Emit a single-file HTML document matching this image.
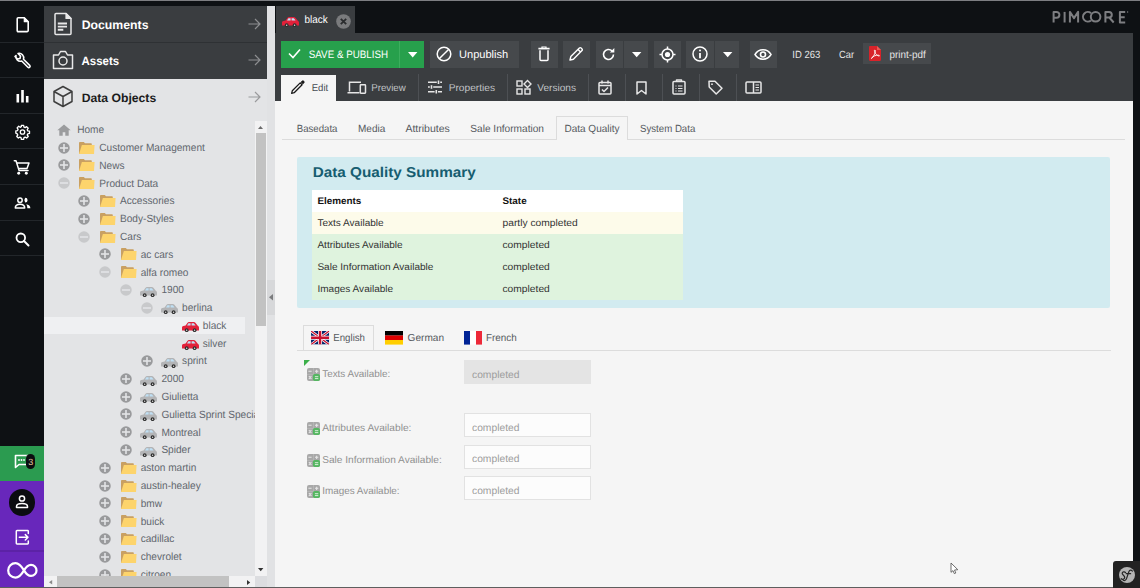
<!DOCTYPE html>
<html><head><meta charset="utf-8"><style>
html,body{margin:0;padding:0;}
body{width:1140px;height:588px;overflow:hidden;position:relative;font-family:'Liberation Sans', sans-serif;background:#0e1114;}
svg{display:block;overflow:visible}
</style></head><body>
<div style="position:absolute;left:0px;top:0px;width:1140px;height:588px;background:#0e1114;"></div>
<div style="position:absolute;left:0px;top:0px;width:1140px;height:1px;background:#7d7e82;"></div>
<div style="position:absolute;left:0px;top:41.6px;width:44px;height:1px;background:#22262a;"></div>
<div style="position:absolute;left:0px;top:77.2px;width:44px;height:1px;background:#22262a;"></div>
<div style="position:absolute;left:0px;top:112.80000000000001px;width:44px;height:1px;background:#22262a;"></div>
<div style="position:absolute;left:0px;top:148.4px;width:44px;height:1px;background:#22262a;"></div>
<div style="position:absolute;left:0px;top:184.0px;width:44px;height:1px;background:#22262a;"></div>
<div style="position:absolute;left:0px;top:219.60000000000002px;width:44px;height:1px;background:#22262a;"></div>
<div style="position:absolute;left:0px;top:255.20000000000002px;width:44px;height:1px;background:#22262a;"></div>
<svg style="position:absolute;left:16px;top:17.2px;" width="14" height="16" viewBox="0 0 14 16"><path d="M2.2 0.8H8.3L12.2 4.7V13.6C12.2 14.2 11.8 14.6 11.2 14.6H2.2C1.6 14.6 1.2 14.2 1.2 13.6V1.8C1.2 1.2 1.6 0.8 2.2 0.8z" fill="none" stroke="#fff" stroke-width="1.6" stroke-linejoin="round"/><path d="M8.3 0.8V4.7H12.2z" fill="#fff" stroke="#fff" stroke-width="1.2" stroke-linejoin="round"/></svg>
<svg style="position:absolute;left:13.2px;top:52px;" width="18" height="18" viewBox="0 0 18 18"><path d="M2 4.5l2.5 2.5 2.5-0.5 0.5-2.5-2.5-2.5a4.5 4.5 0 0 1 5.5 5.7l6.2 6.2a1.2 1.2 0 0 1-1.8 1.8l-6.2-6.2a4.5 4.5 0 0 1-5.7-5.5z" fill="none" stroke="#fff" stroke-width="1.6" stroke-linejoin="round" stroke-linecap="round"/></svg>
<svg style="position:absolute;left:15px;top:89px;" width="15" height="14" viewBox="0 0 15 14"><rect x="1.5" y="5" width="2.6" height="8.5" fill="#fff"/><rect x="6.2" y="1" width="2.6" height="12.5" fill="#fff"/><rect x="10.9" y="7" width="2.6" height="6.5" fill="#fff"/></svg>
<svg style="position:absolute;left:14px;top:124px;" width="17" height="16" viewBox="0 0 24 24"><path d="M10.3 2h3.4l.5 2.6 1.8.8 2.2-1.5 2.4 2.4-1.5 2.2.8 1.8 2.6.5v3.4l-2.6.5-.8 1.8 1.5 2.2-2.4 2.4-2.2-1.5-1.8.8-.5 2.6h-3.4l-.5-2.6-1.8-.8-2.2 1.5-2.4-2.4 1.5-2.2-.8-1.8L2 13.7v-3.4l2.6-.5.8-1.8-1.5-2.2 2.4-2.4 2.2 1.5 1.8-.8z" fill="none" stroke="#fff" stroke-width="2" stroke-linejoin="round"/><circle cx="12" cy="12" r="3.3" fill="none" stroke="#fff" stroke-width="2"/></svg>
<svg style="position:absolute;left:13px;top:159px;" width="17" height="17" viewBox="0 0 17 17"><path d="M1.3 1.7H3L6 11.4H15 M4.3 4H16L14 9.5H5.6" fill="none" stroke="#fff" stroke-width="1.5" stroke-linejoin="round" stroke-linecap="round"/><circle cx="5.7" cy="14.3" r="1.45" fill="#fff"/><circle cx="13.3" cy="14.3" r="1.45" fill="#fff"/></svg>
<svg style="position:absolute;left:14px;top:196px;" width="17" height="13" viewBox="0 0 17 13"><circle cx="6" cy="4.2" r="2.2" fill="none" stroke="#fff" stroke-width="1.5"/><path d="M1.3 12C1.3 9.5 3.5 8.2 6 8.2S10.7 9.5 10.7 12z" fill="none" stroke="#fff" stroke-width="1.5" stroke-linejoin="round"/><path d="M11.2 1.8A2.4 2.4 0 0 1 11.2 6.6A4 4 0 0 1 11.2 1.8z M12.2 8.3C14.8 8.6 16.4 10 16.4 12.3H13.3C13.3 10.6 13 9.3 12.2 8.3z" fill="#fff"/></svg>
<svg style="position:absolute;left:15px;top:232px;" width="15" height="14" viewBox="0 0 15 14"><circle cx="5.8" cy="5.8" r="4.3" fill="none" stroke="#fff" stroke-width="1.8"/><path d="M9 9l4.5 4.5" stroke="#fff" stroke-width="2" stroke-linecap="round"/></svg>
<div style="position:absolute;left:0px;top:445.5px;width:44px;height:35.5px;background:#2b9b50;"></div>
<div style="position:absolute;left:0px;top:481px;width:44px;height:107px;background:#6827bb;"></div>
<div style="position:absolute;left:0px;top:550.3px;width:44px;height:1.4px;background:#5c22a6;"></div>
<svg style="position:absolute;left:14px;top:454px;" width="16" height="16" viewBox="0 0 16 16"><path d="M1.5 1.5h12v9H5l-3.5 3z" fill="none" stroke="#fff" stroke-width="1.6" stroke-linejoin="round" stroke-linecap="round"/><circle cx="5" cy="6" r=".9" fill="#fff"/><circle cx="7.5" cy="6" r=".9" fill="#fff"/><circle cx="10" cy="6" r=".9" fill="#fff"/></svg>
<div style="position:absolute;left:25.9px;top:454.3px;width:9.5px;height:15px;background:#0b0d10;border-radius:5px;"></div>
<div style="position:absolute;left:8.8px;top:489px;width:26.5px;height:26.5px;border-radius:50%;background:#0b0c10"></div>
<svg style="position:absolute;left:14px;top:495px;" width="16" height="14" viewBox="0 0 16 14"><circle cx="8" cy="3.5" r="2.6" fill="none" stroke="#fff" stroke-width="1.5"/><path d="M2.5 12.5v-1c0-1.8 2.5-3 5.5-3s5.5 1.2 5.5 3v1z" fill="none" stroke="#fff" stroke-width="1.5" stroke-linejoin="round"/></svg>
<svg style="position:absolute;left:14px;top:529px;" width="17" height="17" viewBox="0 0 17 17"><path d="M14.3 4.6V2.3c0-.4-.3-.7-.7-.7H3c-.4 0-.7.3-.7.7v12c0 .4.3.7.7.7h10.6c.4 0 .7-.3.7-.7V12 M5.3 8.3h8.7 M11.3 5.6l2.7 2.7-2.7 2.7" fill="none" stroke="#fff" stroke-width="1.5" stroke-linejoin="round" stroke-linecap="round"/></svg>
<svg style="position:absolute;left:7px;top:560px;" width="31" height="20" viewBox="0 0 31 20"><path d="M17 10.4C15 7 12.5 3.1 8.5 3.1A7.3 7.3 0 0 0 8.5 17.7C12.5 17.7 15 13.8 17 10.4 19 7 21 4.9 24 4.9A5.5 5.5 0 0 1 24 15.9C21 15.9 19 13.8 17 10.4z" fill="none" stroke="#fff" stroke-width="2.2"/></svg>
<div style="position:absolute;left:44px;top:6px;width:223.5px;height:36.5px;background:#3a3d40;"></div>
<div style="position:absolute;left:44px;top:42px;width:223.5px;height:1px;background:#2e3134;"></div>
<div style="position:absolute;left:44px;top:43px;width:223.5px;height:35.5px;background:#3a3d40;"></div>
<div style="position:absolute;left:44px;top:78.5px;width:231px;height:509px;background:#e3e4e6;"></div>
<div style="position:absolute;left:267px;top:6px;width:8px;height:581px;background:#e1e2e4;"></div>
<div style="position:absolute;left:267px;top:280px;width:8px;height:34.5px;background:#d7d8da;"></div>
<svg style="position:absolute;left:269px;top:294px;" width="4" height="6.6" viewBox="0 0 4 6.6"><path d="M4 0V6.6L0 3.3z" fill="#7a7b7d"/></svg>
<svg style="position:absolute;left:53px;top:12px;" width="20" height="24" viewBox="0 0 20 24"><path d="M3 1.5h10l5 5v15c0 .6-.4 1-1 1H3c-.6 0-1-.4-1-1v-19c0-.6.4-1 1-1z" fill="none" stroke="#e8e8e8" stroke-width="1.5" stroke-linejoin="round" stroke-linecap="round"/><path d="M13 1.5v5h5z" fill="#e8e8e8" stroke="#e8e8e8" stroke-width="1.2" stroke-linejoin="round"/><path d="M4.8 11.5h9.2 M4.8 14.6h9.2 M4.8 17.7h5.5" stroke="#e8e8e8" stroke-width="1.9"/></svg>
<svg style="position:absolute;left:52px;top:50px;" width="22" height="20" viewBox="0 0 22 20"><path d="M1.5 5h5l2-3.5h5L15.5 5h5v13.5h-19z" fill="none" stroke="#e8e8e8" stroke-width="1.5" stroke-linejoin="round" stroke-linecap="round"/><circle cx="11" cy="11" r="4" fill="none" stroke="#e8e8e8" stroke-width="1.5" stroke-linejoin="round" stroke-linecap="round"/></svg>
<svg style="position:absolute;left:52px;top:85px;" width="22" height="23" viewBox="0 0 22 23"><path d="M11 1.5l9 5v10l-9 5-9-5v-10z M2 6.5l9 5 9-5 M11 11.5v10" fill="none" stroke="#3e3e3e" stroke-width="1.5" stroke-linejoin="round"/></svg>
<svg style="position:absolute;left:248px;top:18.3px;" width="13" height="12" viewBox="0 0 13 12"><path d="M0.5 6h11.5 M7 1l5 5-5 5" fill="none" stroke="#8d8f91" stroke-width="1.15"/></svg>
<svg style="position:absolute;left:248px;top:54.4px;" width="13" height="12" viewBox="0 0 13 12"><path d="M0.5 6h11.5 M7 1l5 5-5 5" fill="none" stroke="#8d8f91" stroke-width="1.15"/></svg>
<svg style="position:absolute;left:248px;top:91.2px;" width="13" height="12" viewBox="0 0 13 12"><path d="M0.5 6h11.5 M7 1l5 5-5 5" fill="none" stroke="#9a9b9d" stroke-width="1.15"/></svg>
<div style="position:absolute;left:44px;top:115px;width:211px;height:461px;overflow:hidden">
<svg style="position:absolute;left:13px;top:8.90px;" width="14" height="12" viewBox="0 0 14 12"><path d="M7 0.5L0.3 6.3h2v5.4h3.4V8.3h2.6v3.4h3.4V6.3h2z" fill="#9b9c9e"/></svg>
<svg style="position:absolute;left:13.70px;top:26.58px;" width="12" height="12" viewBox="0 0 12 12"><circle cx="6" cy="6" r="5.75" fill="#999a9c"/><path d="M2 6h8" stroke="#e3e4e6" stroke-width="1.6"/><path d="M6 2v8" stroke="#e3e4e6" stroke-width="1.6"/></svg>
<svg style="position:absolute;left:35.40px;top:26.68px;" width="16" height="12" viewBox="0 0 16 12"><path d="M0 1.2C0 .5.4 0 1 0H4.8L6 1.2H11.8C12.4 1.2 12.8 1.6 12.8 2.2V11.9H0z" fill="#c9a062"/><path d="M2.9 2.9H15.6L15 11.9H0z" fill="#fdd46c"/></svg>
<svg style="position:absolute;left:13.70px;top:44.37px;" width="12" height="12" viewBox="0 0 12 12"><circle cx="6" cy="6" r="5.75" fill="#999a9c"/><path d="M2 6h8" stroke="#e3e4e6" stroke-width="1.6"/><path d="M6 2v8" stroke="#e3e4e6" stroke-width="1.6"/></svg>
<svg style="position:absolute;left:35.40px;top:44.47px;" width="16" height="12" viewBox="0 0 16 12"><path d="M0 1.2C0 .5.4 0 1 0H4.8L6 1.2H11.8C12.4 1.2 12.8 1.6 12.8 2.2V11.9H0z" fill="#c9a062"/><path d="M2.9 2.9H15.6L15 11.9H0z" fill="#fdd46c"/></svg>
<svg style="position:absolute;left:13.70px;top:62.16px;" width="12" height="12" viewBox="0 0 12 12"><circle cx="6" cy="6" r="5.75" fill="#c8c9cb"/><path d="M2 6h8" stroke="#e3e4e6" stroke-width="1.6"/></svg>
<svg style="position:absolute;left:35.40px;top:62.26px;" width="16" height="12" viewBox="0 0 16 12"><path d="M0 1.2C0 .5.4 0 1 0H4.8L6 1.2H11.8C12.4 1.2 12.8 1.6 12.8 2.2V11.9H0z" fill="#c9a062"/><path d="M2.9 2.9H15.6L15 11.9H0z" fill="#fdd46c"/></svg>
<svg style="position:absolute;left:34.40px;top:79.95px;" width="12" height="12" viewBox="0 0 12 12"><circle cx="6" cy="6" r="5.75" fill="#999a9c"/><path d="M2 6h8" stroke="#e3e4e6" stroke-width="1.6"/><path d="M6 2v8" stroke="#e3e4e6" stroke-width="1.6"/></svg>
<svg style="position:absolute;left:56.10px;top:80.05px;" width="16" height="12" viewBox="0 0 16 12"><path d="M0 1.2C0 .5.4 0 1 0H4.8L6 1.2H11.8C12.4 1.2 12.8 1.6 12.8 2.2V11.9H0z" fill="#c9a062"/><path d="M2.9 2.9H15.6L15 11.9H0z" fill="#fdd46c"/></svg>
<svg style="position:absolute;left:34.40px;top:97.74px;" width="12" height="12" viewBox="0 0 12 12"><circle cx="6" cy="6" r="5.75" fill="#999a9c"/><path d="M2 6h8" stroke="#e3e4e6" stroke-width="1.6"/><path d="M6 2v8" stroke="#e3e4e6" stroke-width="1.6"/></svg>
<svg style="position:absolute;left:56.10px;top:97.84px;" width="16" height="12" viewBox="0 0 16 12"><path d="M0 1.2C0 .5.4 0 1 0H4.8L6 1.2H11.8C12.4 1.2 12.8 1.6 12.8 2.2V11.9H0z" fill="#c9a062"/><path d="M2.9 2.9H15.6L15 11.9H0z" fill="#fdd46c"/></svg>
<svg style="position:absolute;left:34.40px;top:115.53px;" width="12" height="12" viewBox="0 0 12 12"><circle cx="6" cy="6" r="5.75" fill="#c8c9cb"/><path d="M2 6h8" stroke="#e3e4e6" stroke-width="1.6"/></svg>
<svg style="position:absolute;left:56.10px;top:115.63px;" width="16" height="12" viewBox="0 0 16 12"><path d="M0 1.2C0 .5.4 0 1 0H4.8L6 1.2H11.8C12.4 1.2 12.8 1.6 12.8 2.2V11.9H0z" fill="#c9a062"/><path d="M2.9 2.9H15.6L15 11.9H0z" fill="#fdd46c"/></svg>
<svg style="position:absolute;left:55.10px;top:133.33px;" width="12" height="12" viewBox="0 0 12 12"><circle cx="6" cy="6" r="5.75" fill="#999a9c"/><path d="M2 6h8" stroke="#e3e4e6" stroke-width="1.6"/><path d="M6 2v8" stroke="#e3e4e6" stroke-width="1.6"/></svg>
<svg style="position:absolute;left:76.80px;top:133.43px;" width="16" height="12" viewBox="0 0 16 12"><path d="M0 1.2C0 .5.4 0 1 0H4.8L6 1.2H11.8C12.4 1.2 12.8 1.6 12.8 2.2V11.9H0z" fill="#c9a062"/><path d="M2.9 2.9H15.6L15 11.9H0z" fill="#fdd46c"/></svg>
<svg style="position:absolute;left:55.10px;top:151.11px;" width="12" height="12" viewBox="0 0 12 12"><circle cx="6" cy="6" r="5.75" fill="#c8c9cb"/><path d="M2 6h8" stroke="#e3e4e6" stroke-width="1.6"/></svg>
<svg style="position:absolute;left:76.80px;top:151.21px;" width="16" height="12" viewBox="0 0 16 12"><path d="M0 1.2C0 .5.4 0 1 0H4.8L6 1.2H11.8C12.4 1.2 12.8 1.6 12.8 2.2V11.9H0z" fill="#c9a062"/><path d="M2.9 2.9H15.6L15 11.9H0z" fill="#fdd46c"/></svg>
<svg style="position:absolute;left:75.80px;top:168.90px;" width="12" height="12" viewBox="0 0 12 12"><circle cx="6" cy="6" r="5.75" fill="#c8c9cb"/><path d="M2 6h8" stroke="#e3e4e6" stroke-width="1.6"/></svg>
<svg style="position:absolute;left:96.10px;top:171.60px;" width="17" height="10.2" viewBox="0 0 17 10.2"><path d="M0 8.6V5.6C0 4.8.5 4.3 1.3 4.1L3.6 3.6 5.4 1C5.8.4 6.3 0 7 0H11.8C12.5 0 13 .3 13.4.8L15.8 3.8C16.6 4.2 17 4.8 17 5.6V8.6z" fill="#b3b4b6"/><path d="M5 3.5L6.4 1.3H8.6V3.5z M9.6 1.3H11.8L13.6 3.5H9.6z" fill="#bfe0f5"/><circle cx="4.7" cy="8.2" r="1.9" fill="#2d2d2d"/><circle cx="4.7" cy="8.2" r=".7" fill="#ddd"/><circle cx="12.6" cy="8.2" r="1.9" fill="#2d2d2d"/><circle cx="12.6" cy="8.2" r=".7" fill="#ddd"/></svg>
<svg style="position:absolute;left:96.50px;top:186.69px;" width="12" height="12" viewBox="0 0 12 12"><circle cx="6" cy="6" r="5.75" fill="#c8c9cb"/><path d="M2 6h8" stroke="#e3e4e6" stroke-width="1.6"/></svg>
<svg style="position:absolute;left:116.80px;top:189.39px;" width="17" height="10.2" viewBox="0 0 17 10.2"><path d="M0 8.6V5.6C0 4.8.5 4.3 1.3 4.1L3.6 3.6 5.4 1C5.8.4 6.3 0 7 0H11.8C12.5 0 13 .3 13.4.8L15.8 3.8C16.6 4.2 17 4.8 17 5.6V8.6z" fill="#b3b4b6"/><path d="M5 3.5L6.4 1.3H8.6V3.5z M9.6 1.3H11.8L13.6 3.5H9.6z" fill="#bfe0f5"/><circle cx="4.7" cy="8.2" r="1.9" fill="#2d2d2d"/><circle cx="4.7" cy="8.2" r=".7" fill="#ddd"/><circle cx="12.6" cy="8.2" r="1.9" fill="#2d2d2d"/><circle cx="12.6" cy="8.2" r=".7" fill="#ddd"/></svg>
<div style="position:absolute;left:0px;top:201.59px;width:201px;height:17.79px;background:#eff0f2"></div>
<svg style="position:absolute;left:137.50px;top:207.18px;" width="17" height="10.2" viewBox="0 0 17 10.2"><path d="M0 8.6V5.6C0 4.8.5 4.3 1.3 4.1L3.6 3.6 5.4 1C5.8.4 6.3 0 7 0H11.8C12.5 0 13 .3 13.4.8L15.8 3.8C16.6 4.2 17 4.8 17 5.6V8.6z" fill="#e2213a"/><path d="M5 3.5L6.4 1.3H8.6V3.5z M9.6 1.3H11.8L13.6 3.5H9.6z" fill="#bfe0f5"/><circle cx="4.7" cy="8.2" r="1.9" fill="#2d2d2d"/><circle cx="4.7" cy="8.2" r=".7" fill="#ddd"/><circle cx="12.6" cy="8.2" r="1.9" fill="#2d2d2d"/><circle cx="12.6" cy="8.2" r=".7" fill="#ddd"/></svg>
<svg style="position:absolute;left:137.50px;top:224.97px;" width="17" height="10.2" viewBox="0 0 17 10.2"><path d="M0 8.6V5.6C0 4.8.5 4.3 1.3 4.1L3.6 3.6 5.4 1C5.8.4 6.3 0 7 0H11.8C12.5 0 13 .3 13.4.8L15.8 3.8C16.6 4.2 17 4.8 17 5.6V8.6z" fill="#e2213a"/><path d="M5 3.5L6.4 1.3H8.6V3.5z M9.6 1.3H11.8L13.6 3.5H9.6z" fill="#bfe0f5"/><circle cx="4.7" cy="8.2" r="1.9" fill="#2d2d2d"/><circle cx="4.7" cy="8.2" r=".7" fill="#ddd"/><circle cx="12.6" cy="8.2" r="1.9" fill="#2d2d2d"/><circle cx="12.6" cy="8.2" r=".7" fill="#ddd"/></svg>
<svg style="position:absolute;left:96.50px;top:240.06px;" width="12" height="12" viewBox="0 0 12 12"><circle cx="6" cy="6" r="5.75" fill="#999a9c"/><path d="M2 6h8" stroke="#e3e4e6" stroke-width="1.6"/><path d="M6 2v8" stroke="#e3e4e6" stroke-width="1.6"/></svg>
<svg style="position:absolute;left:116.80px;top:242.76px;" width="17" height="10.2" viewBox="0 0 17 10.2"><path d="M0 8.6V5.6C0 4.8.5 4.3 1.3 4.1L3.6 3.6 5.4 1C5.8.4 6.3 0 7 0H11.8C12.5 0 13 .3 13.4.8L15.8 3.8C16.6 4.2 17 4.8 17 5.6V8.6z" fill="#b3b4b6"/><path d="M5 3.5L6.4 1.3H8.6V3.5z M9.6 1.3H11.8L13.6 3.5H9.6z" fill="#bfe0f5"/><circle cx="4.7" cy="8.2" r="1.9" fill="#2d2d2d"/><circle cx="4.7" cy="8.2" r=".7" fill="#ddd"/><circle cx="12.6" cy="8.2" r="1.9" fill="#2d2d2d"/><circle cx="12.6" cy="8.2" r=".7" fill="#ddd"/></svg>
<svg style="position:absolute;left:75.80px;top:257.85px;" width="12" height="12" viewBox="0 0 12 12"><circle cx="6" cy="6" r="5.75" fill="#999a9c"/><path d="M2 6h8" stroke="#e3e4e6" stroke-width="1.6"/><path d="M6 2v8" stroke="#e3e4e6" stroke-width="1.6"/></svg>
<svg style="position:absolute;left:96.10px;top:260.55px;" width="17" height="10.2" viewBox="0 0 17 10.2"><path d="M0 8.6V5.6C0 4.8.5 4.3 1.3 4.1L3.6 3.6 5.4 1C5.8.4 6.3 0 7 0H11.8C12.5 0 13 .3 13.4.8L15.8 3.8C16.6 4.2 17 4.8 17 5.6V8.6z" fill="#b3b4b6"/><path d="M5 3.5L6.4 1.3H8.6V3.5z M9.6 1.3H11.8L13.6 3.5H9.6z" fill="#bfe0f5"/><circle cx="4.7" cy="8.2" r="1.9" fill="#2d2d2d"/><circle cx="4.7" cy="8.2" r=".7" fill="#ddd"/><circle cx="12.6" cy="8.2" r="1.9" fill="#2d2d2d"/><circle cx="12.6" cy="8.2" r=".7" fill="#ddd"/></svg>
<svg style="position:absolute;left:75.80px;top:275.64px;" width="12" height="12" viewBox="0 0 12 12"><circle cx="6" cy="6" r="5.75" fill="#999a9c"/><path d="M2 6h8" stroke="#e3e4e6" stroke-width="1.6"/><path d="M6 2v8" stroke="#e3e4e6" stroke-width="1.6"/></svg>
<svg style="position:absolute;left:96.10px;top:278.34px;" width="17" height="10.2" viewBox="0 0 17 10.2"><path d="M0 8.6V5.6C0 4.8.5 4.3 1.3 4.1L3.6 3.6 5.4 1C5.8.4 6.3 0 7 0H11.8C12.5 0 13 .3 13.4.8L15.8 3.8C16.6 4.2 17 4.8 17 5.6V8.6z" fill="#b3b4b6"/><path d="M5 3.5L6.4 1.3H8.6V3.5z M9.6 1.3H11.8L13.6 3.5H9.6z" fill="#bfe0f5"/><circle cx="4.7" cy="8.2" r="1.9" fill="#2d2d2d"/><circle cx="4.7" cy="8.2" r=".7" fill="#ddd"/><circle cx="12.6" cy="8.2" r="1.9" fill="#2d2d2d"/><circle cx="12.6" cy="8.2" r=".7" fill="#ddd"/></svg>
<svg style="position:absolute;left:75.80px;top:293.43px;" width="12" height="12" viewBox="0 0 12 12"><circle cx="6" cy="6" r="5.75" fill="#999a9c"/><path d="M2 6h8" stroke="#e3e4e6" stroke-width="1.6"/><path d="M6 2v8" stroke="#e3e4e6" stroke-width="1.6"/></svg>
<svg style="position:absolute;left:96.10px;top:296.13px;" width="17" height="10.2" viewBox="0 0 17 10.2"><path d="M0 8.6V5.6C0 4.8.5 4.3 1.3 4.1L3.6 3.6 5.4 1C5.8.4 6.3 0 7 0H11.8C12.5 0 13 .3 13.4.8L15.8 3.8C16.6 4.2 17 4.8 17 5.6V8.6z" fill="#b3b4b6"/><path d="M5 3.5L6.4 1.3H8.6V3.5z M9.6 1.3H11.8L13.6 3.5H9.6z" fill="#bfe0f5"/><circle cx="4.7" cy="8.2" r="1.9" fill="#2d2d2d"/><circle cx="4.7" cy="8.2" r=".7" fill="#ddd"/><circle cx="12.6" cy="8.2" r="1.9" fill="#2d2d2d"/><circle cx="12.6" cy="8.2" r=".7" fill="#ddd"/></svg>
<svg style="position:absolute;left:75.80px;top:311.22px;" width="12" height="12" viewBox="0 0 12 12"><circle cx="6" cy="6" r="5.75" fill="#999a9c"/><path d="M2 6h8" stroke="#e3e4e6" stroke-width="1.6"/><path d="M6 2v8" stroke="#e3e4e6" stroke-width="1.6"/></svg>
<svg style="position:absolute;left:96.10px;top:313.92px;" width="17" height="10.2" viewBox="0 0 17 10.2"><path d="M0 8.6V5.6C0 4.8.5 4.3 1.3 4.1L3.6 3.6 5.4 1C5.8.4 6.3 0 7 0H11.8C12.5 0 13 .3 13.4.8L15.8 3.8C16.6 4.2 17 4.8 17 5.6V8.6z" fill="#b3b4b6"/><path d="M5 3.5L6.4 1.3H8.6V3.5z M9.6 1.3H11.8L13.6 3.5H9.6z" fill="#bfe0f5"/><circle cx="4.7" cy="8.2" r="1.9" fill="#2d2d2d"/><circle cx="4.7" cy="8.2" r=".7" fill="#ddd"/><circle cx="12.6" cy="8.2" r="1.9" fill="#2d2d2d"/><circle cx="12.6" cy="8.2" r=".7" fill="#ddd"/></svg>
<svg style="position:absolute;left:75.80px;top:329.01px;" width="12" height="12" viewBox="0 0 12 12"><circle cx="6" cy="6" r="5.75" fill="#999a9c"/><path d="M2 6h8" stroke="#e3e4e6" stroke-width="1.6"/><path d="M6 2v8" stroke="#e3e4e6" stroke-width="1.6"/></svg>
<svg style="position:absolute;left:96.10px;top:331.71px;" width="17" height="10.2" viewBox="0 0 17 10.2"><path d="M0 8.6V5.6C0 4.8.5 4.3 1.3 4.1L3.6 3.6 5.4 1C5.8.4 6.3 0 7 0H11.8C12.5 0 13 .3 13.4.8L15.8 3.8C16.6 4.2 17 4.8 17 5.6V8.6z" fill="#b3b4b6"/><path d="M5 3.5L6.4 1.3H8.6V3.5z M9.6 1.3H11.8L13.6 3.5H9.6z" fill="#bfe0f5"/><circle cx="4.7" cy="8.2" r="1.9" fill="#2d2d2d"/><circle cx="4.7" cy="8.2" r=".7" fill="#ddd"/><circle cx="12.6" cy="8.2" r="1.9" fill="#2d2d2d"/><circle cx="12.6" cy="8.2" r=".7" fill="#ddd"/></svg>
<svg style="position:absolute;left:55.10px;top:346.80px;" width="12" height="12" viewBox="0 0 12 12"><circle cx="6" cy="6" r="5.75" fill="#999a9c"/><path d="M2 6h8" stroke="#e3e4e6" stroke-width="1.6"/><path d="M6 2v8" stroke="#e3e4e6" stroke-width="1.6"/></svg>
<svg style="position:absolute;left:76.80px;top:346.90px;" width="16" height="12" viewBox="0 0 16 12"><path d="M0 1.2C0 .5.4 0 1 0H4.8L6 1.2H11.8C12.4 1.2 12.8 1.6 12.8 2.2V11.9H0z" fill="#c9a062"/><path d="M2.9 2.9H15.6L15 11.9H0z" fill="#fdd46c"/></svg>
<svg style="position:absolute;left:55.10px;top:364.59px;" width="12" height="12" viewBox="0 0 12 12"><circle cx="6" cy="6" r="5.75" fill="#999a9c"/><path d="M2 6h8" stroke="#e3e4e6" stroke-width="1.6"/><path d="M6 2v8" stroke="#e3e4e6" stroke-width="1.6"/></svg>
<svg style="position:absolute;left:76.80px;top:364.69px;" width="16" height="12" viewBox="0 0 16 12"><path d="M0 1.2C0 .5.4 0 1 0H4.8L6 1.2H11.8C12.4 1.2 12.8 1.6 12.8 2.2V11.9H0z" fill="#c9a062"/><path d="M2.9 2.9H15.6L15 11.9H0z" fill="#fdd46c"/></svg>
<svg style="position:absolute;left:55.10px;top:382.38px;" width="12" height="12" viewBox="0 0 12 12"><circle cx="6" cy="6" r="5.75" fill="#999a9c"/><path d="M2 6h8" stroke="#e3e4e6" stroke-width="1.6"/><path d="M6 2v8" stroke="#e3e4e6" stroke-width="1.6"/></svg>
<svg style="position:absolute;left:76.80px;top:382.48px;" width="16" height="12" viewBox="0 0 16 12"><path d="M0 1.2C0 .5.4 0 1 0H4.8L6 1.2H11.8C12.4 1.2 12.8 1.6 12.8 2.2V11.9H0z" fill="#c9a062"/><path d="M2.9 2.9H15.6L15 11.9H0z" fill="#fdd46c"/></svg>
<svg style="position:absolute;left:55.10px;top:400.17px;" width="12" height="12" viewBox="0 0 12 12"><circle cx="6" cy="6" r="5.75" fill="#999a9c"/><path d="M2 6h8" stroke="#e3e4e6" stroke-width="1.6"/><path d="M6 2v8" stroke="#e3e4e6" stroke-width="1.6"/></svg>
<svg style="position:absolute;left:76.80px;top:400.27px;" width="16" height="12" viewBox="0 0 16 12"><path d="M0 1.2C0 .5.4 0 1 0H4.8L6 1.2H11.8C12.4 1.2 12.8 1.6 12.8 2.2V11.9H0z" fill="#c9a062"/><path d="M2.9 2.9H15.6L15 11.9H0z" fill="#fdd46c"/></svg>
<svg style="position:absolute;left:55.10px;top:417.96px;" width="12" height="12" viewBox="0 0 12 12"><circle cx="6" cy="6" r="5.75" fill="#999a9c"/><path d="M2 6h8" stroke="#e3e4e6" stroke-width="1.6"/><path d="M6 2v8" stroke="#e3e4e6" stroke-width="1.6"/></svg>
<svg style="position:absolute;left:76.80px;top:418.06px;" width="16" height="12" viewBox="0 0 16 12"><path d="M0 1.2C0 .5.4 0 1 0H4.8L6 1.2H11.8C12.4 1.2 12.8 1.6 12.8 2.2V11.9H0z" fill="#c9a062"/><path d="M2.9 2.9H15.6L15 11.9H0z" fill="#fdd46c"/></svg>
<svg style="position:absolute;left:55.10px;top:435.75px;" width="12" height="12" viewBox="0 0 12 12"><circle cx="6" cy="6" r="5.75" fill="#999a9c"/><path d="M2 6h8" stroke="#e3e4e6" stroke-width="1.6"/><path d="M6 2v8" stroke="#e3e4e6" stroke-width="1.6"/></svg>
<svg style="position:absolute;left:76.80px;top:435.86px;" width="16" height="12" viewBox="0 0 16 12"><path d="M0 1.2C0 .5.4 0 1 0H4.8L6 1.2H11.8C12.4 1.2 12.8 1.6 12.8 2.2V11.9H0z" fill="#c9a062"/><path d="M2.9 2.9H15.6L15 11.9H0z" fill="#fdd46c"/></svg>
<svg style="position:absolute;left:55.10px;top:453.55px;" width="12" height="12" viewBox="0 0 12 12"><circle cx="6" cy="6" r="5.75" fill="#999a9c"/><path d="M2 6h8" stroke="#e3e4e6" stroke-width="1.6"/><path d="M6 2v8" stroke="#e3e4e6" stroke-width="1.6"/></svg>
<svg style="position:absolute;left:76.80px;top:453.65px;" width="16" height="12" viewBox="0 0 16 12"><path d="M0 1.2C0 .5.4 0 1 0H4.8L6 1.2H11.8C12.4 1.2 12.8 1.6 12.8 2.2V11.9H0z" fill="#c9a062"/><path d="M2.9 2.9H15.6L15 11.9H0z" fill="#fdd46c"/></svg>
</div>
<div style="position:absolute;left:255px;top:121px;width:12px;height:455px;background:#f2f2f3;"></div>
<svg style="position:absolute;left:258.3px;top:126.4px;" width="5" height="3" viewBox="0 0 5 3"><path d="M0 3L2.5 0 5 3z" fill="#6a6a6a"/></svg>
<div style="position:absolute;left:256px;top:133.4px;width:10px;height:192.6px;background:#c2c2c2;"></div>
<svg style="position:absolute;left:258.2px;top:567.8px;" width="5.4" height="3.2" viewBox="0 0 5.4 3.2"><path d="M0 0H5.4L2.7 3.2z" fill="#333"/></svg>
<div style="position:absolute;left:44px;top:576px;width:211px;height:11px;background:#f2f2f3;"></div>
<div style="position:absolute;left:57px;top:576px;width:172px;height:11px;background:#c2c2c2;"></div>
<svg style="position:absolute;left:49.1px;top:580.3px;" width="3.2" height="4.6" viewBox="0 0 3.2 4.6"><path d="M3.2 0V4.6L0 2.3z" fill="#8a8a8a"/></svg>
<svg style="position:absolute;left:247px;top:579.6px;" width="3.2" height="5" viewBox="0 0 3.2 5"><path d="M0 0V5L3.2 2.5z" fill="#333"/></svg>
<div style="position:absolute;left:255px;top:576px;width:12px;height:11px;background:#dcdde0;"></div>
<div style="position:absolute;left:275.5px;top:6px;width:79.5px;height:27px;background:#3a3d40;"></div>
<svg style="position:absolute;left:282.3px;top:16.6px;" width="17" height="10.2" viewBox="0 0 17 10.2"><path d="M0 8.6V5.6C0 4.8.5 4.3 1.3 4.1L3.6 3.6 5.4 1C5.8.4 6.3 0 7 0H11.8C12.5 0 13 .3 13.4.8L15.8 3.8C16.6 4.2 17 4.8 17 5.6V8.6z" fill="#e2213a"/><path d="M5 3.5L6.4 1.3H8.6V3.5z M9.6 1.3H11.8L13.6 3.5H9.6z" fill="#bfe0f5"/><circle cx="4.7" cy="8.2" r="1.9" fill="#2d2d2d"/><circle cx="4.7" cy="8.2" r=".7" fill="#ddd"/><circle cx="12.6" cy="8.2" r="1.9" fill="#2d2d2d"/><circle cx="12.6" cy="8.2" r=".7" fill="#ddd"/></svg>
<svg style="position:absolute;left:336px;top:14px;" width="15" height="15" viewBox="0 0 15 15"><circle cx="7.5" cy="7.5" r="7.3" fill="#7a7b7d"/><path d="M4.8 4.8l5.4 5.4 M10.2 4.8l-5.4 5.4" stroke="#2a2c2e" stroke-width="1.8"/></svg>
<svg style="position:absolute;left:1052px;top:10px;" width="77" height="14" viewBox="0 0 77 14"><g fill="none" stroke="#7d7e81" stroke-width="2" stroke-linejoin="round"><path d="M1.6 12.5V1.9h2.9a2.9 2.9 0 0 1 0 5.8H1.6"/><path d="M12.6 1.9v10.6"/><path d="M17.9 12.5V1.9l4.1 6.2 4.1-6.2v10.6"/><path d="M39 3.2A4.8 4.8 0 1 0 39 10.4"/><circle cx="43.6" cy="6.8" r="4.8"/><path d="M53.4 12.5V1.9h3.6a2.8 2.8 0 0 1 0 5.6h-3.6 M57.3 7.5l4.4 5"/><path d="M73.2 1.9h-5.3v10.6h5.3 M67.9 7.2h4.8"/></g><circle cx="75.6" cy="2" r=".7" fill="#7d7e81"/></svg>
<div style="position:absolute;left:275px;top:33px;width:858px;height:68px;background:#3a3d40;"></div>
<div style="position:absolute;left:1133px;top:33px;width:7px;height:555px;background:#0e1114;"></div>
<div style="position:absolute;left:281px;top:41px;width:143px;height:27px;background:#27a04c;"></div>
<div style="position:absolute;left:399px;top:41px;width:1px;height:27px;background:#3cae5e;"></div>
<svg style="position:absolute;left:288px;top:48px;" width="13" height="11" viewBox="0 0 13 11"><path d="M1 5.5l4 4L12 1.5" fill="none" stroke="#fff" stroke-width="1.6"/></svg>
<svg style="position:absolute;left:408.2px;top:51.6px;" width="9.4" height="5.6" viewBox="0 0 9.4 5.6"><path d="M0 0H9.4L4.7 5.6z" fill="#fff"/></svg>
<div style="position:absolute;left:430px;top:41px;width:89px;height:27px;background:#46494c;"></div>
<svg style="position:absolute;left:436px;top:46px;" width="16" height="16" viewBox="0 0 16 16"><circle cx="8" cy="8" r="6.8" fill="none" stroke="#fff" stroke-width="1.5"/><path d="M3.2 12.8L12.8 3.2" stroke="#fff" stroke-width="1.5"/></svg>
<div style="position:absolute;left:531px;top:41px;width:26.5px;height:27px;background:#46494c;"></div>
<svg style="position:absolute;left:538px;top:46px;" width="12" height="16" viewBox="0 0 12 16"><path d="M0.4 2.6H11.6" stroke="#fff" stroke-width="1.7"/><path d="M4 2.2V1H8V2.2" fill="none" stroke="#fff" stroke-width="1.2"/><path d="M2 4.2V13.6C2 14.2 2.4 14.6 3 14.6H9C9.6 14.6 10 14.2 10 13.6V4.2" fill="none" stroke="#fff" stroke-width="1.5"/></svg>
<div style="position:absolute;left:563px;top:41px;width:27px;height:27px;background:#46494c;"></div>
<svg style="position:absolute;left:568px;top:46px;" width="16" height="16" viewBox="0 0 16 16"><path d="M2 14l.8-3.4 8.6-8.6a1.2 1.2 0 0 1 1.7 0l.9.9a1.2 1.2 0 0 1 0 1.7L5.4 13.2z M10 3.4l2.6 2.6" fill="none" stroke="#fff" stroke-width="1.4" stroke-linejoin="round"/></svg>
<div style="position:absolute;left:596px;top:41px;width:27px;height:27px;background:#46494c;"></div>
<div style="position:absolute;left:624px;top:41px;width:24px;height:27px;background:#46494c;"></div>
<svg style="position:absolute;left:601px;top:47px;" width="15" height="15" viewBox="0 0 15 15"><path d="M12.5 7.5a5 5 0 1 1-1.5-3.6" fill="none" stroke="#fff" stroke-width="1.6"/><path d="M13.3 1v4.5H8.8z" fill="#fff"/></svg>
<svg style="position:absolute;left:632px;top:51.8px;" width="9.4" height="5.3" viewBox="0 0 9.4 5.3"><path d="M0 0H9.4L4.7 5.3z" fill="#fff"/></svg>
<div style="position:absolute;left:653.7px;top:41px;width:27px;height:27px;background:#46494c;"></div>
<svg style="position:absolute;left:659px;top:46px;" width="17" height="17" viewBox="0 0 17 17"><circle cx="8.5" cy="8.5" r="5.5" fill="none" stroke="#fff" stroke-width="1.5"/><circle cx="8.5" cy="8.5" r="2.6" fill="#fff"/><path d="M8.5 0.5v2.5 M8.5 14v2.5 M0.5 8.5H3 M14 8.5h2.5" stroke="#fff" stroke-width="1.5"/></svg>
<div style="position:absolute;left:686px;top:41px;width:28px;height:27px;background:#46494c;"></div>
<div style="position:absolute;left:715px;top:41px;width:24px;height:27px;background:#46494c;"></div>
<svg style="position:absolute;left:692px;top:46px;" width="16" height="16" viewBox="0 0 16 16"><circle cx="8" cy="8" r="7" fill="none" stroke="#fff" stroke-width="1.5"/><circle cx="8" cy="4.6" r="1" fill="#fff"/><path d="M8 7v5.2" stroke="#fff" stroke-width="1.8"/></svg>
<svg style="position:absolute;left:722.6px;top:51.8px;" width="9.4" height="5.3" viewBox="0 0 9.4 5.3"><path d="M0 0H9.4L4.7 5.3z" fill="#fff"/></svg>
<div style="position:absolute;left:750px;top:41px;width:27px;height:27px;background:#46494c;"></div>
<svg style="position:absolute;left:754px;top:49px;" width="18" height="11" viewBox="0 0 18 11"><path d="M1 5.5C3 2.2 5.8 0.8 9 0.8s6 1.4 8 4.7c-2 3.3-4.8 4.7-8 4.7S3 8.8 1 5.5z" fill="none" stroke="#fff" stroke-width="1.5"/><circle cx="9" cy="5.5" r="2.5" fill="none" stroke="#fff" stroke-width="1.6"/></svg>
<div style="position:absolute;left:863.2px;top:42.8px;width:67.8px;height:21.7px;background:#46494c;"></div>
<svg style="position:absolute;left:868.7px;top:46.1px;" width="12" height="15" viewBox="0 0 12 15"><path d="M0 1.2C0 .5.5 0 1.2 0h6.8L12 4v9.8c0 .7-.5 1.2-1.2 1.2H1.2C.5 15 0 14.5 0 13.8z" fill="#d8232a"/><path d="M8 0V4H12z" fill="#ee5b55"/><path d="M2.5 12.5c1.5-1 3.2-4 3.8-7 .2-1.2-.2-1.7-.6-1.5s-.3 1 .2 2.2c.8 2 2.2 3.4 3.8 3.8.8.2 1-.3.5-.6-1-.6-4-.2-6.7 1.5z" fill="none" stroke="#fff" stroke-width=".9"/></svg>
<div style="position:absolute;left:281.3px;top:75px;width:54.7px;height:26px;background:#f5f5f5;"></div>
<svg style="position:absolute;left:290px;top:80px;" width="15" height="15" viewBox="0 0 15 15"><path d="M1.6 13.4L2.3 10.8 10.2 2.9 12.1 4.8 4.2 12.7Z" fill="none" stroke="#1a1a1a" stroke-width="1.3" stroke-linejoin="round"/><path d="M10.9 2.2L12 1.1C12.5.6 13.3.6 13.8 1.1L13.9 1.2C14.4 1.7 14.4 2.5 13.9 3L12.8 4.1Z" fill="#1a1a1a" stroke="#1a1a1a" stroke-width=".6"/></svg>
<svg style="position:absolute;left:347px;top:81px;" width="20" height="13" viewBox="0 0 20 13"><path d="M2.5 10.5V1.2h11.5 M0.5 11.8h12" fill="none" stroke="#e6e6e6" stroke-width="1.5"/><rect x="13.3" y="3.8" width="5.2" height="8.4" rx=".6" fill="none" stroke="#e6e6e6" stroke-width="1.5"/></svg>
<div style="position:absolute;left:418px;top:74px;width:1px;height:27px;background:#4d5054;"></div>
<div style="position:absolute;left:507px;top:74px;width:1px;height:27px;background:#4d5054;"></div>
<div style="position:absolute;left:588px;top:74px;width:1px;height:27px;background:#4d5054;"></div>
<div style="position:absolute;left:625px;top:74px;width:1px;height:27px;background:#4d5054;"></div>
<div style="position:absolute;left:662px;top:74px;width:1px;height:27px;background:#4d5054;"></div>
<div style="position:absolute;left:699px;top:74px;width:1px;height:27px;background:#4d5054;"></div>
<div style="position:absolute;left:736px;top:74px;width:1px;height:27px;background:#4d5054;"></div>
<svg style="position:absolute;left:427px;top:80px;" width="16" height="15" viewBox="0 0 16 15"><path d="M1 2.3h8.8 M13.2 2.3H15 M1 7H2.8 M6.2 7H15 M1 11.7H7.6 M11 11.7H15" stroke="#e6e6e6" stroke-width="1.5"/><path d="M11.5 0.5v3.6 M4.5 5.2v3.6 M9.3 9.9v3.6" stroke="#e6e6e6" stroke-width="1.6"/></svg>
<svg style="position:absolute;left:516px;top:80px;" width="16" height="15" viewBox="0 0 16 15"><rect x="1" y="1" width="5" height="5" fill="none" stroke="#e6e6e6" stroke-width="1.4"/><rect x="1" y="9" width="5" height="5" fill="none" stroke="#e6e6e6" stroke-width="1.4"/><rect x="9" y="9" width="5" height="5" fill="none" stroke="#e6e6e6" stroke-width="1.4"/><path d="M11.5 0.5l3.5 3.5-3.5 3.5L8 4z" fill="none" stroke="#e6e6e6" stroke-width="1.4"/></svg>
<svg style="position:absolute;left:598px;top:80px;" width="14" height="15" viewBox="0 0 14 15"><rect x="1" y="2.5" width="12" height="11.5" rx="1" fill="none" stroke="#e6e6e6" stroke-width="1.5" stroke-linejoin="round"/><path d="M1 5.5h12 M4 0.5v3 M10 0.5v3" fill="none" stroke="#e6e6e6" stroke-width="1.5" stroke-linejoin="round"/><path d="M4 9.5l2 2 4-4" fill="none" stroke="#e6e6e6" stroke-width="1.5" stroke-linejoin="round"/></svg>
<svg style="position:absolute;left:636px;top:81px;" width="11" height="14" viewBox="0 0 11 14"><path d="M1 1h9v12L5.5 9.5 1 13z" fill="none" stroke="#e6e6e6" stroke-width="1.5" stroke-linejoin="round"/></svg>
<svg style="position:absolute;left:672px;top:79px;" width="14" height="16" viewBox="0 0 14 16"><rect x="1" y="2.5" width="12" height="12.5" rx="1" fill="none" stroke="#e6e6e6" stroke-width="1.5" stroke-linejoin="round"/><path d="M4.5 2.5V1h5v1.5" fill="none" stroke="#e6e6e6" stroke-width="1.5" stroke-linejoin="round"/><path d="M3.5 7h1 M6 7h4.5 M3.5 9.5h1 M6 9.5h4.5 M3.5 12h1 M6 12h4.5" stroke="#e6e6e6" stroke-width="1.2"/></svg>
<svg style="position:absolute;left:708px;top:80px;" width="15" height="15" viewBox="0 0 15 15"><path d="M1 1.2h6l7 7-5.8 5.8-7-7z" fill="none" stroke="#e6e6e6" stroke-width="1.5" stroke-linejoin="round"/><circle cx="4" cy="4.2" r=".9" fill="#e6e6e6"/></svg>
<svg style="position:absolute;left:745px;top:81px;" width="17" height="13" viewBox="0 0 17 13"><rect x="1" y="1" width="15" height="11" rx="1" fill="none" stroke="#e6e6e6" stroke-width="1.5" stroke-linejoin="round"/><path d="M8.5 1v11" fill="none" stroke="#e6e6e6" stroke-width="1.5" stroke-linejoin="round"/><path d="M10.5 4h3.5 M10.5 6.5h3.5 M10.5 9h3.5" stroke="#e6e6e6" stroke-width="1.2"/></svg>
<div style="position:absolute;left:275px;top:101px;width:858px;height:486px;background:#f5f5f5;"></div>
<div style="position:absolute;left:282px;top:139px;width:843px;height:1px;background:#dcdcdc;"></div>
<div style="position:absolute;left:555.8px;top:116px;width:72.2px;height:24px;background:#f5f5f5;border:1px solid #dcdcdc;border-bottom:none;box-sizing:border-box;"></div>
<div style="position:absolute;left:297px;top:156.5px;width:813.2px;height:151.5px;background:#d2ebf0;border-radius:2px;"></div>
<div style="position:absolute;left:312px;top:190px;width:371px;height:22px;background:#ffffff;"></div>
<div style="position:absolute;left:312px;top:212px;width:371px;height:22px;background:#fdfbea;"></div>
<div style="position:absolute;left:312px;top:234px;width:371px;height:66px;background:#dff3de;"></div>
<div style="position:absolute;left:303.4px;top:324.5px;width:70.6px;height:26.5px;background:#f5f5f5;border:1px solid #dcdcdc;border-bottom:none;box-sizing:border-box;"></div>
<div style="position:absolute;left:297px;top:350px;width:813.5px;height:1px;background:#dcdcdc;"></div>
<svg style="position:absolute;left:310.8px;top:331.4px;" width="18.2" height="13.6" viewBox="0 0 60 45"><defs><clipPath id="ukc"><rect width="60" height="45"/></clipPath></defs><g clip-path="url(#ukc)"><rect width="60" height="45" fill="#012169"/><path d="M0 0L60 45M60 0L0 45" stroke="#fff" stroke-width="9"/><path d="M0 0L60 45M60 0L0 45" stroke="#C8102E" stroke-width="4"/><path d="M30 0v45M0 22.5h60" stroke="#fff" stroke-width="13"/><path d="M30 0v45M0 22.5h60" stroke="#C8102E" stroke-width="8"/></g></svg>
<svg style="position:absolute;left:385px;top:331.4px;" width="18" height="13.6" viewBox="0 0 18 13.6"><rect width="18" height="4.6" fill="#000"/><rect y="4.5" width="18" height="4.6" fill="#dd0000"/><rect y="9" width="18" height="4.6" fill="#ffce00"/></svg>
<svg style="position:absolute;left:464px;top:331.4px;" width="18" height="13.6" viewBox="0 0 18 13.6"><rect width="6" height="13.6" fill="#002395"/><rect x="6" width="6" height="13.6" fill="#fff"/><rect x="12" width="6" height="13.6" fill="#ed2939"/></svg>
<svg style="position:absolute;left:304px;top:360px;" width="6" height="6" viewBox="0 0 6 6"><path d="M0 0h6L0 6z" fill="#3cb04a"/></svg>
<svg style="position:absolute;left:306.8px;top:368px;" width="13" height="13" viewBox="0 0 13 13"><rect width="13" height="13" rx="2" fill="#a8a8a8"/><path d="M6.5 0v13 M0 6.5h13" stroke="#bdbdbd" stroke-width=".6"/><rect x="5.9" y="5.9" width="7.1" height="7.1" rx="1.8" fill="#55b661"/><path d="M1.4 3.3h3.2 M8 3.3h3.3 M9.65 1.7v3.2 M1.9 8.2l2.5 2.6 M4.4 8.2l-2.5 2.6" stroke="#e6e6e6" stroke-width="1.1"/><path d="M7.9 8.7h3.4 M7.9 10.6h3.4" stroke="#d5efd8" stroke-width="1"/></svg>
<svg style="position:absolute;left:306.8px;top:422px;" width="13" height="13" viewBox="0 0 13 13"><rect width="13" height="13" rx="2" fill="#a8a8a8"/><path d="M6.5 0v13 M0 6.5h13" stroke="#bdbdbd" stroke-width=".6"/><rect x="5.9" y="5.9" width="7.1" height="7.1" rx="1.8" fill="#55b661"/><path d="M1.4 3.3h3.2 M8 3.3h3.3 M9.65 1.7v3.2 M1.9 8.2l2.5 2.6 M4.4 8.2l-2.5 2.6" stroke="#e6e6e6" stroke-width="1.1"/><path d="M7.9 8.7h3.4 M7.9 10.6h3.4" stroke="#d5efd8" stroke-width="1"/></svg>
<svg style="position:absolute;left:306.8px;top:453.5px;" width="13" height="13" viewBox="0 0 13 13"><rect width="13" height="13" rx="2" fill="#a8a8a8"/><path d="M6.5 0v13 M0 6.5h13" stroke="#bdbdbd" stroke-width=".6"/><rect x="5.9" y="5.9" width="7.1" height="7.1" rx="1.8" fill="#55b661"/><path d="M1.4 3.3h3.2 M8 3.3h3.3 M9.65 1.7v3.2 M1.9 8.2l2.5 2.6 M4.4 8.2l-2.5 2.6" stroke="#e6e6e6" stroke-width="1.1"/><path d="M7.9 8.7h3.4 M7.9 10.6h3.4" stroke="#d5efd8" stroke-width="1"/></svg>
<svg style="position:absolute;left:306.8px;top:484.5px;" width="13" height="13" viewBox="0 0 13 13"><rect width="13" height="13" rx="2" fill="#a8a8a8"/><path d="M6.5 0v13 M0 6.5h13" stroke="#bdbdbd" stroke-width=".6"/><rect x="5.9" y="5.9" width="7.1" height="7.1" rx="1.8" fill="#55b661"/><path d="M1.4 3.3h3.2 M8 3.3h3.3 M9.65 1.7v3.2 M1.9 8.2l2.5 2.6 M4.4 8.2l-2.5 2.6" stroke="#e6e6e6" stroke-width="1.1"/><path d="M7.9 8.7h3.4 M7.9 10.6h3.4" stroke="#d5efd8" stroke-width="1"/></svg>
<div style="position:absolute;left:464px;top:360px;width:127px;height:23.6px;background:#e4e4e4;"></div>
<div style="position:absolute;left:464px;top:413.2px;width:127px;height:23.8px;background:#fcfcfc;border:1px solid #e2e2e2;box-sizing:border-box;"></div>
<div style="position:absolute;left:464px;top:444.8px;width:127px;height:23.8px;background:#fcfcfc;border:1px solid #e2e2e2;box-sizing:border-box;"></div>
<div style="position:absolute;left:464px;top:476.2px;width:127px;height:23.8px;background:#fcfcfc;border:1px solid #e2e2e2;box-sizing:border-box;"></div>
<div style="position:absolute;left:0px;top:587px;width:1140px;height:1px;background:#5e5e5e;"></div>
<div style="position:absolute;left:1113.2px;top:561.2px;width:26.8px;height:26.8px;background:#222222;border-top-left-radius:3px;"></div>
<div style="position:absolute;left:1118.8px;top:566.8px;width:16.4px;height:16.4px;border-radius:50%;background:#b4b4b4"></div>
<svg style="position:absolute;left:949px;top:561px;" width="11" height="15" viewBox="0 0 11 15"><path d="M2 2V11.3L4 9.6 5.3 12.6 6.8 12 5.5 9 8.8 8.7Z" fill="#fff" stroke="#555" stroke-width=".85" stroke-linejoin="round"/></svg>
<svg style="position:absolute;left:0;top:0" width="1140" height="588" viewBox="0 0 1140 588" font-family="Liberation Sans, sans-serif" text-rendering="geometricPrecision"><defs><clipPath id="treeclip"><rect x="44" y="115" width="211" height="461"/></clipPath></defs><text x="28.30" y="465.00" font-size="9" fill="#e8c9a0" font-weight="400" textLength="5.00" lengthAdjust="spacingAndGlyphs">3</text><text x="81.70" y="29.00" font-size="12.3" fill="#ffffff" font-weight="700" textLength="66.80" lengthAdjust="spacingAndGlyphs">Documents</text><text x="81.50" y="65.00" font-size="12.1" fill="#ffffff" font-weight="700" textLength="37.60" lengthAdjust="spacingAndGlyphs">Assets</text><text x="81.70" y="101.50" font-size="12.1" fill="#1b1b1b" font-weight="700" textLength="74.50" lengthAdjust="spacingAndGlyphs">Data Objects</text><text x="77.20" y="133.20" font-size="10.5" fill="#61666d" font-weight="400" textLength="26.94" lengthAdjust="spacingAndGlyphs" clip-path="url(#treeclip)">Home</text><text x="99.30" y="150.99" font-size="10.5" fill="#61666d" font-weight="400" textLength="105.53" lengthAdjust="spacingAndGlyphs" clip-path="url(#treeclip)">Customer Management</text><text x="99.30" y="168.78" font-size="10.5" fill="#61666d" font-weight="400" textLength="25.25" lengthAdjust="spacingAndGlyphs" clip-path="url(#treeclip)">News</text><text x="99.30" y="186.57" font-size="10.5" fill="#61666d" font-weight="400" textLength="58.94" lengthAdjust="spacingAndGlyphs" clip-path="url(#treeclip)">Product Data</text><text x="120.00" y="204.36" font-size="10.5" fill="#61666d" font-weight="400" textLength="54.44" lengthAdjust="spacingAndGlyphs" clip-path="url(#treeclip)">Accessories</text><text x="120.00" y="222.15" font-size="10.5" fill="#61666d" font-weight="400" textLength="53.89" lengthAdjust="spacingAndGlyphs" clip-path="url(#treeclip)">Body-Styles</text><text x="120.00" y="239.94" font-size="10.5" fill="#61666d" font-weight="400" textLength="21.32" lengthAdjust="spacingAndGlyphs" clip-path="url(#treeclip)">Cars</text><text x="140.70" y="257.73" font-size="10.5" fill="#61666d" font-weight="400" textLength="32.55" lengthAdjust="spacingAndGlyphs" clip-path="url(#treeclip)">ac cars</text><text x="140.70" y="275.52" font-size="10.5" fill="#61666d" font-weight="400" textLength="47.71" lengthAdjust="spacingAndGlyphs" clip-path="url(#treeclip)">alfa romeo</text><text x="161.40" y="293.31" font-size="10.5" fill="#61666d" font-weight="400" textLength="22.47" lengthAdjust="spacingAndGlyphs" clip-path="url(#treeclip)">1900</text><text x="182.10" y="311.10" font-size="10.5" fill="#61666d" font-weight="400" textLength="30.32" lengthAdjust="spacingAndGlyphs" clip-path="url(#treeclip)">berlina</text><text x="202.80" y="328.89" font-size="10.5" fill="#61666d" font-weight="400" textLength="23.58" lengthAdjust="spacingAndGlyphs" clip-path="url(#treeclip)">black</text><text x="202.80" y="346.68" font-size="10.5" fill="#61666d" font-weight="400" textLength="23.57" lengthAdjust="spacingAndGlyphs" clip-path="url(#treeclip)">silver</text><text x="182.10" y="364.47" font-size="10.5" fill="#61666d" font-weight="400" textLength="24.70" lengthAdjust="spacingAndGlyphs" clip-path="url(#treeclip)">sprint</text><text x="161.40" y="382.26" font-size="10.5" fill="#61666d" font-weight="400" textLength="22.47" lengthAdjust="spacingAndGlyphs" clip-path="url(#treeclip)">2000</text><text x="161.40" y="400.05" font-size="10.5" fill="#61666d" font-weight="400" textLength="37.05" lengthAdjust="spacingAndGlyphs" clip-path="url(#treeclip)">Giulietta</text><text x="161.40" y="417.84" font-size="10.5" fill="#61666d" font-weight="400" textLength="105.54" lengthAdjust="spacingAndGlyphs" clip-path="url(#treeclip)">Gulietta Sprint Speciale</text><text x="161.40" y="435.63" font-size="10.5" fill="#61666d" font-weight="400" textLength="39.29" lengthAdjust="spacingAndGlyphs" clip-path="url(#treeclip)">Montreal</text><text x="161.40" y="453.42" font-size="10.5" fill="#61666d" font-weight="400" textLength="29.19" lengthAdjust="spacingAndGlyphs" clip-path="url(#treeclip)">Spider</text><text x="140.70" y="471.21" font-size="10.5" fill="#61666d" font-weight="400" textLength="55.57" lengthAdjust="spacingAndGlyphs" clip-path="url(#treeclip)">aston martin</text><text x="140.70" y="489.00" font-size="10.5" fill="#61666d" font-weight="400" textLength="60.07" lengthAdjust="spacingAndGlyphs" clip-path="url(#treeclip)">austin-healey</text><text x="140.70" y="506.79" font-size="10.5" fill="#61666d" font-weight="400" textLength="21.32" lengthAdjust="spacingAndGlyphs" clip-path="url(#treeclip)">bmw</text><text x="140.70" y="524.58" font-size="10.5" fill="#61666d" font-weight="400" textLength="23.58" lengthAdjust="spacingAndGlyphs" clip-path="url(#treeclip)">buick</text><text x="140.70" y="542.37" font-size="10.5" fill="#61666d" font-weight="400" textLength="33.68" lengthAdjust="spacingAndGlyphs" clip-path="url(#treeclip)">cadillac</text><text x="140.70" y="560.16" font-size="10.5" fill="#61666d" font-weight="400" textLength="40.98" lengthAdjust="spacingAndGlyphs" clip-path="url(#treeclip)">chevrolet</text><text x="140.70" y="577.95" font-size="10.5" fill="#61666d" font-weight="400" textLength="30.31" lengthAdjust="spacingAndGlyphs" clip-path="url(#treeclip)">citroen</text><text x="304.60" y="23.00" font-size="10.8" fill="#ffffff" font-weight="400" textLength="23.10" lengthAdjust="spacingAndGlyphs">black</text><text x="308.80" y="58.00" font-size="10.8" fill="#ffffff" font-weight="400" textLength="79.20" lengthAdjust="spacingAndGlyphs">SAVE &amp; PUBLISH</text><text x="459.00" y="58.00" font-size="11" fill="#ffffff" font-weight="400" textLength="49.20" lengthAdjust="spacingAndGlyphs">Unpublish</text><text x="792.30" y="58.00" font-size="10.4" fill="#e6e6e6" font-weight="400" textLength="27.90" lengthAdjust="spacingAndGlyphs">ID 263</text><text x="839.00" y="58.00" font-size="10.4" fill="#e6e6e6" font-weight="400" textLength="15.00" lengthAdjust="spacingAndGlyphs">Car</text><text x="889.60" y="58.00" font-size="10.4" fill="#e6e6e6" font-weight="400" textLength="36.20" lengthAdjust="spacingAndGlyphs">print-pdf</text><text x="311.70" y="91.00" font-size="10" fill="#454b53" font-weight="400" textLength="16.50" lengthAdjust="spacingAndGlyphs">Edit</text><text x="371.20" y="91.00" font-size="10" fill="#c0c3c6" font-weight="400" textLength="34.60" lengthAdjust="spacingAndGlyphs">Preview</text><text x="448.70" y="91.00" font-size="10" fill="#c0c3c6" font-weight="400" textLength="46.30" lengthAdjust="spacingAndGlyphs">Properties</text><text x="537.30" y="91.00" font-size="10" fill="#c0c3c6" font-weight="400" textLength="38.70" lengthAdjust="spacingAndGlyphs">Versions</text><text x="296.70" y="132.00" font-size="10.4" fill="#555a60" font-weight="400" textLength="40.80" lengthAdjust="spacingAndGlyphs">Basedata</text><text x="358.00" y="132.00" font-size="10.4" fill="#555a60" font-weight="400" textLength="27.30" lengthAdjust="spacingAndGlyphs">Media</text><text x="405.40" y="132.00" font-size="10.4" fill="#555a60" font-weight="400" textLength="44.40" lengthAdjust="spacingAndGlyphs">Attributes</text><text x="470.30" y="132.00" font-size="10.4" fill="#555a60" font-weight="400" textLength="73.70" lengthAdjust="spacingAndGlyphs">Sale Information</text><text x="564.40" y="132.00" font-size="10.4" fill="#555a60" font-weight="400" textLength="55.20" lengthAdjust="spacingAndGlyphs">Data Quality</text><text x="640.00" y="132.00" font-size="10.4" fill="#555a60" font-weight="400" textLength="55.30" lengthAdjust="spacingAndGlyphs">System Data</text><text x="312.70" y="177.00" font-size="14.2" fill="#165d70" font-weight="700" textLength="163.00" lengthAdjust="spacingAndGlyphs">Data Quality Summary</text><text x="317.40" y="204.00" font-size="9.6" fill="#111" font-weight="700" textLength="43.88" lengthAdjust="spacingAndGlyphs">Elements</text><text x="502.50" y="204.00" font-size="9.6" fill="#111" font-weight="700" textLength="24.13" lengthAdjust="spacingAndGlyphs">State</text><text x="317.40" y="226.00" font-size="9.8" fill="#333" font-weight="400" textLength="66.29" lengthAdjust="spacingAndGlyphs">Texts Available</text><text x="502.50" y="226.00" font-size="9.8" fill="#333" font-weight="400" textLength="75.20" lengthAdjust="spacingAndGlyphs">partly completed</text><text x="317.40" y="248.00" font-size="9.8" fill="#333" font-weight="400" textLength="85.29" lengthAdjust="spacingAndGlyphs">Attributes Available</text><text x="502.50" y="248.00" font-size="9.8" fill="#333" font-weight="400" textLength="47.29" lengthAdjust="spacingAndGlyphs">completed</text><text x="317.40" y="270.00" font-size="9.8" fill="#333" font-weight="400" textLength="116.01" lengthAdjust="spacingAndGlyphs">Sale Information Available</text><text x="502.50" y="270.00" font-size="9.8" fill="#333" font-weight="400" textLength="47.29" lengthAdjust="spacingAndGlyphs">completed</text><text x="317.40" y="292.00" font-size="9.8" fill="#333" font-weight="400" textLength="75.79" lengthAdjust="spacingAndGlyphs">Images Available</text><text x="502.50" y="292.00" font-size="9.8" fill="#333" font-weight="400" textLength="47.29" lengthAdjust="spacingAndGlyphs">completed</text><text x="333.30" y="341.00" font-size="10.2" fill="#555a60" font-weight="400" textLength="31.70" lengthAdjust="spacingAndGlyphs">English</text><text x="407.60" y="341.00" font-size="10.2" fill="#555a60" font-weight="400" textLength="36.40" lengthAdjust="spacingAndGlyphs">German</text><text x="486.00" y="341.00" font-size="10.2" fill="#555a60" font-weight="400" textLength="30.70" lengthAdjust="spacingAndGlyphs">French</text><text x="322.20" y="377.00" font-size="10" fill="#909090" font-weight="400" textLength="68.00" lengthAdjust="spacingAndGlyphs">Texts Available:</text><text x="322.20" y="431.00" font-size="10" fill="#909090" font-weight="400" textLength="89.20" lengthAdjust="spacingAndGlyphs">Attributes Available:</text><text x="322.20" y="462.50" font-size="10" fill="#909090" font-weight="400" textLength="119.60" lengthAdjust="spacingAndGlyphs">Sale Information Available:</text><text x="322.20" y="493.50" font-size="10" fill="#909090" font-weight="400" textLength="77.40" lengthAdjust="spacingAndGlyphs">Images Available:</text><text x="472.00" y="378.00" font-size="10.3" fill="#9c9c9c" font-weight="400" textLength="47.50" lengthAdjust="spacingAndGlyphs">completed</text><text x="472.00" y="431.00" font-size="10.3" fill="#9c9c9c" font-weight="400" textLength="47.50" lengthAdjust="spacingAndGlyphs">completed</text><text x="472.00" y="462.30" font-size="10.3" fill="#9c9c9c" font-weight="400" textLength="47.50" lengthAdjust="spacingAndGlyphs">completed</text><text x="472.00" y="493.50" font-size="10.3" fill="#9c9c9c" font-weight="400" textLength="47.50" lengthAdjust="spacingAndGlyphs">completed</text><path d="M1125.6 572.6C1124.6 571.3 1122.1 571.7 1122.2 573.5 1122.4 575.2 1124.9 575.6 1124.7 577.5 1124.5 579.3 1122.1 579.9 1121.2 578.7 M1132.3 571.2C1131.9 569.6 1129.6 569.6 1128.9 571.6L1126.6 578.4C1126 580.2 1124.6 581.1 1123.3 580.3 M1126.3 573.7H1130.6" fill="none" stroke="#262626" stroke-width="1.25" stroke-linecap="round"/></svg>
</body></html>
